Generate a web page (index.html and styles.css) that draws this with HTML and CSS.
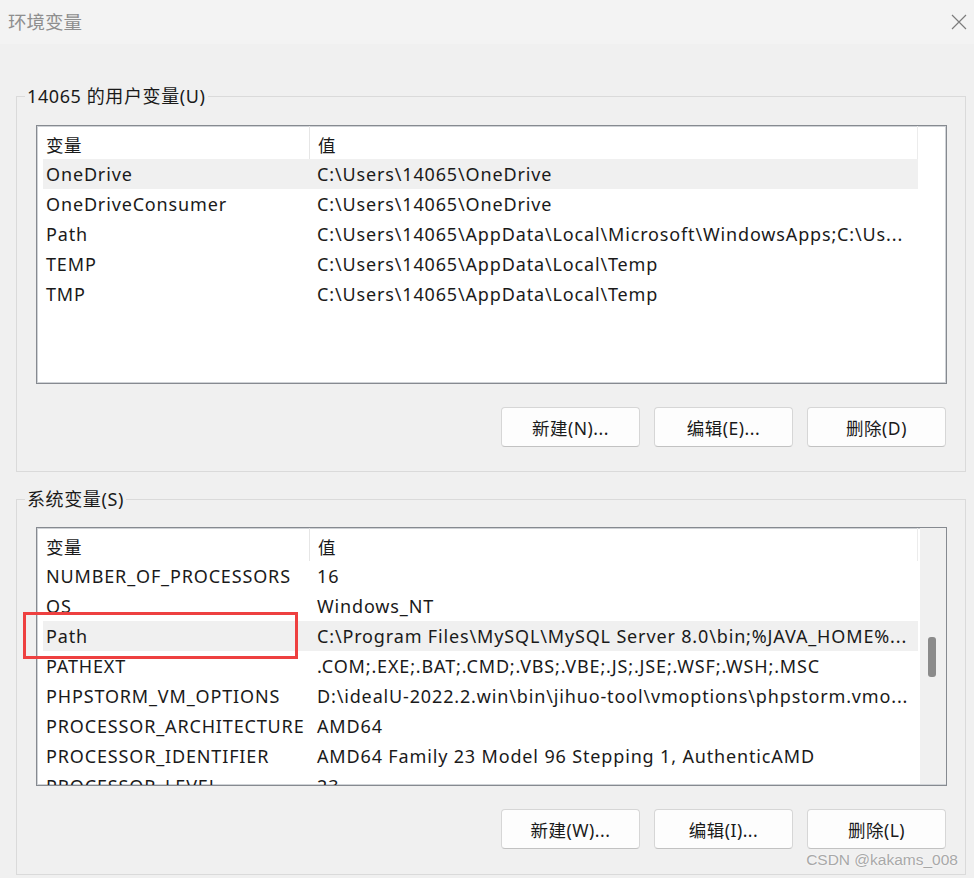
FILE: index.html
```html
<!DOCTYPE html>
<html lang="zh-CN">
<head>
<meta charset="utf-8">
<title>环境变量</title>
<link rel="stylesheet" href="styles.css">
</head>
<body>
<div class="window">
  <div class="titlebar">
    <span class="title">环境变量</span>
    <svg class="close" width="16" height="16" viewBox="0 0 16 16"><path d="M1 1 L15 15 M15 1 L1 15" stroke="#7c7c7c" stroke-width="1.2" fill="none"/></svg>
  </div>
  <div class="content">
    <fieldset class="group group-user">
      <legend>14065 的用户变量(U)</legend>
      <div class="list">
        <div class="list-body">
          <div class="row head"><div class="c1">变量</div><div class="c2">值</div></div>
          <div class="row sel"><div class="c1">OneDrive</div><div class="c2">C:\Users\14065\OneDrive</div></div>
          <div class="row"><div class="c1">OneDriveConsumer</div><div class="c2">C:\Users\14065\OneDrive</div></div>
          <div class="row"><div class="c1">Path</div><div class="c2">C:\Users\14065\AppData\Local\Microsoft\WindowsApps;C:\Us...</div></div>
          <div class="row"><div class="c1">TEMP</div><div class="c2">C:\Users\14065\AppData\Local\Temp</div></div>
          <div class="row"><div class="c1">TMP</div><div class="c2">C:\Users\14065\AppData\Local\Temp</div></div>
        </div>
      </div>
      <div class="buttons">
        <button class="btn">新建(N)...</button>
        <button class="btn">编辑(E)...</button>
        <button class="btn">删除(D)</button>
      </div>
    </fieldset>
    <fieldset class="group group-sys">
      <legend>系统变量(S)</legend>
      <div class="list">
        <div class="list-body">
          <div class="row head"><div class="c1">变量</div><div class="c2">值</div></div>
          <div class="row"><div class="c1">NUMBER_OF_PROCESSORS</div><div class="c2">16</div></div>
          <div class="row"><div class="c1">OS</div><div class="c2">Windows_NT</div></div>
          <div class="row sel"><div class="c1">Path</div><div class="c2">C:\Program Files\MySQL\MySQL Server 8.0\bin;%JAVA_HOME%...</div></div>
          <div class="row"><div class="c1">PATHEXT</div><div class="c2">.COM;.EXE;.BAT;.CMD;.VBS;.VBE;.JS;.JSE;.WSF;.WSH;.MSC</div></div>
          <div class="row"><div class="c1">PHPSTORM_VM_OPTIONS</div><div class="c2">D:\idealU-2022.2.win\bin\jihuo-tool\vmoptions\phpstorm.vmo...</div></div>
          <div class="row"><div class="c1">PROCESSOR_ARCHITECTURE</div><div class="c2">AMD64</div></div>
          <div class="row"><div class="c1">PROCESSOR_IDENTIFIER</div><div class="c2">AMD64 Family 23 Model 96 Stepping 1, AuthenticAMD</div></div>
          <div class="row"><div class="c1">PROCESSOR_LEVEL</div><div class="c2">23</div></div>
        </div>
        <div class="scrollbar"><div class="thumb"></div></div>
      </div>
      <div class="buttons">
        <button class="btn">新建(W)...</button>
        <button class="btn">编辑(I)...</button>
        <button class="btn">删除(L)</button>
      </div>
    </fieldset>
  </div>
  <div class="highlight-box"></div>
  <div class="watermark">CSDN @kakams_008</div>
</div>
</body>
</html>
```
FILE: styles.css
```css
* { box-sizing: border-box; }
html, body { margin: 0; padding: 0; }
body {
  background: #f0f0f0;
  font-family: "Noto Sans", "Noto Sans CJK SC", sans-serif;
  color: #1a1a1a;
  width: 974px;
  height: 878px;
  overflow: hidden;
}
.window { position: relative; width: 974px; height: 878px; }
.titlebar {
  height: 44px;
  background: #f3f3f3;
  display: flex;
  align-items: center;
  justify-content: space-between;
  padding: 0 7px 2px 8px;
}
.title {
  font-family: "Noto Sans CJK SC", sans-serif;
  font-size: 18.5px;
  color: #8e8e8e;
}
.close { display: block; margin-top: 2px; }
.content { padding: 0 8px 0 16px; }
.group {
  margin: 0;
  border: 1px solid #dadada;
  padding: 17px 18px 24px 19px;
  min-width: 0;
}
.group-user { margin-top: 40px; }
.group-sys { margin-top: 15px; padding-top: 16px; padding-bottom: 25px; }
.group legend {
  font-family: "Noto Sans", "Noto Sans CJK SC", sans-serif;
  font-size: 18px;
  letter-spacing: 0.6px;
  line-height: 24px;
  padding: 0 2px;
  margin-left: -11px;
  color: #1a1a1a;
}
.list {
  height: 259px;
  background: #fff;
  border: 1px solid #868a90;
  box-shadow: inset 1px 1px 0 #cfd2d6, inset -1px -1px 0 #cfd2d6;
  display: flex;
  overflow: hidden;
}
.list-body {
  flex: none;
  width: 881px;
  padding-left: 6px;
  overflow: hidden;
}
.row {
  display: grid;
  grid-template-columns: 266px 1fr;
  height: 30px;
  align-items: center;
  font-size: 18px;
  letter-spacing: 0.85px;
  white-space: nowrap;
}
.row .c1 { padding-left: 3px; overflow: hidden; }
.row .c2 { padding-left: 8px; overflow: hidden; }
.row.head {
  height: 33px;
  align-items: stretch;
  border-right: 1px solid #ececec;
  letter-spacing: 0.5px;
}
.row.head .c1, .row.head .c2 {
  display: flex;
  align-items: center;
  padding-top: 3px;
  font-family: "Noto Sans CJK SC", sans-serif;
  font-size: 17.5px;
}
.row.head .c2 { border-left: 1px solid #e6e6e6; }
.row.sel { background: #f0f0f0; }
.scrollbar {
  flex: none;
  width: 26px;
  margin-left: 2px;
  margin-bottom: 1px;
  background: #f0f0f0;
  padding-top: 109px;
  padding-left: 8px;
}
.thumb {
  width: 8px;
  height: 40px;
  background: #8b8b8b;
  border-radius: 3px;
}
.buttons {
  display: flex;
  justify-content: flex-end;
  gap: 14px;
  margin-top: 23px;
  padding-right: 1px;
}
.btn {
  width: 139px;
  height: 40px;
  background: #fdfdfd;
  border: 1px solid #d6d6d6;
  border-bottom-color: #c2c2c2;
  border-radius: 4px;
  font-family: "Noto Sans", "Noto Sans CJK SC", sans-serif;
  font-size: 17.5px;
  letter-spacing: 0.5px;
  color: #1a1a1a;
  padding: 0;
}
.highlight-box {
  position: absolute;
  left: 23px;
  top: 612px;
  width: 275px;
  height: 47px;
  border: 3px solid #ee4040;
}
.watermark {
  position: absolute;
  right: 16px;
  top: 851px;
  font-family: "Liberation Sans", sans-serif;
  font-size: 15.5px;
  color: #a8a8a8;
  text-shadow: 0 0 2px #fff;
}
```
